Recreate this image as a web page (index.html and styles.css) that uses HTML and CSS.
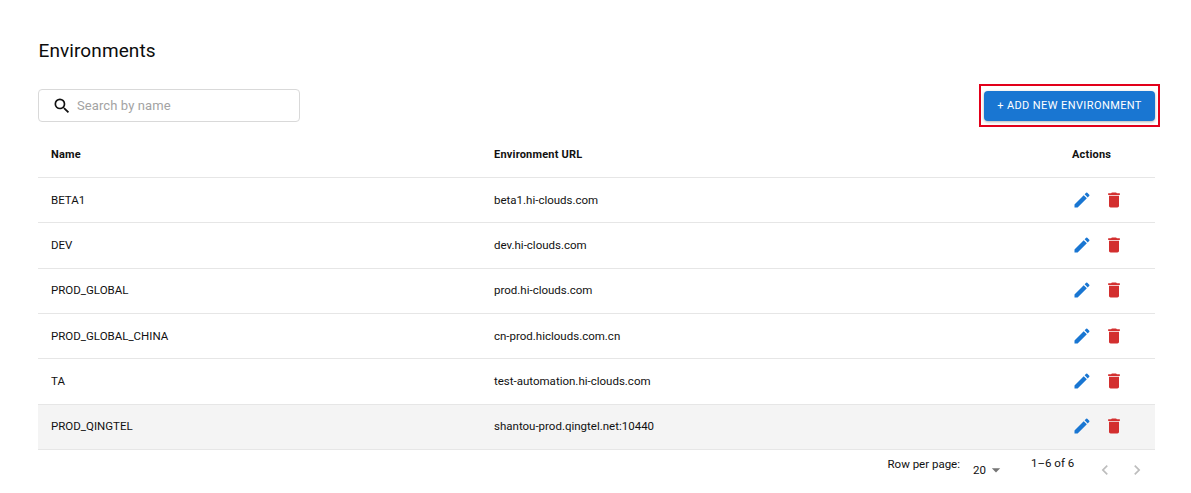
FILE: index.html
```html
<!DOCTYPE html>
<html lang="en">
<head>
<meta charset="utf-8">
<title>Environments</title>
<link rel="stylesheet" href="styles.css">
</head>
<body>
<main class="page">
  <h1 class="title">Environments</h1>
  <div class="toolbar">
    <label class="search">
      <svg class="search-icon" viewBox="0 0 24 24"><path d="M15.5 14h-.79l-.28-.27A6.47 6.47 0 0 0 16 9.5 6.5 6.5 0 1 0 9.5 16c1.61 0 3.09-.59 4.23-1.57l.27.28v.79l5 4.99L20.49 19l-4.99-5zm-6 0C7.01 14 5 11.99 5 9.5S7.01 5 9.5 5 14 7.01 14 9.5 11.99 14 9.5 14z"/></svg>
      <input class="search-input" type="text" placeholder="Search by name">
    </label>
    <div class="add-wrap">
      <button class="add-btn" type="button">+ Add new environment</button>
      <span class="highlight"></span>
    </div>
  </div>
  <div class="table">
    <div class="row head"><div>Name</div><div>Environment URL</div><div>Actions</div></div>
    <div class="row"><div>BETA1</div><div>beta1.hi-clouds.com</div><div class="actions"><svg class="icon edit" viewBox="0 0 24 24"><path d="M3 17.25V21h3.75L17.81 9.94l-3.75-3.75L3 17.25zM20.71 7.04a1 1 0 0 0 0-1.41l-2.34-2.34a1 1 0 0 0-1.41 0l-1.83 1.83 3.75 3.75 1.83-1.83z"/></svg><svg class="icon del" viewBox="0 0 24 24"><path d="M6 19c0 1.1.9 2 2 2h8c1.1 0 2-.9 2-2V7H6v12zM19 4h-3.5l-1-1h-5l-1 1H5v2h14V4z"/></svg></div></div>
    <div class="row"><div>DEV</div><div>dev.hi-clouds.com</div><div class="actions"><svg class="icon edit" viewBox="0 0 24 24"><path d="M3 17.25V21h3.75L17.81 9.94l-3.75-3.75L3 17.25zM20.71 7.04a1 1 0 0 0 0-1.41l-2.34-2.34a1 1 0 0 0-1.41 0l-1.83 1.83 3.75 3.75 1.83-1.83z"/></svg><svg class="icon del" viewBox="0 0 24 24"><path d="M6 19c0 1.1.9 2 2 2h8c1.1 0 2-.9 2-2V7H6v12zM19 4h-3.5l-1-1h-5l-1 1H5v2h14V4z"/></svg></div></div>
    <div class="row"><div>PROD_GLOBAL</div><div>prod.hi-clouds.com</div><div class="actions"><svg class="icon edit" viewBox="0 0 24 24"><path d="M3 17.25V21h3.75L17.81 9.94l-3.75-3.75L3 17.25zM20.71 7.04a1 1 0 0 0 0-1.41l-2.34-2.34a1 1 0 0 0-1.41 0l-1.83 1.83 3.75 3.75 1.83-1.83z"/></svg><svg class="icon del" viewBox="0 0 24 24"><path d="M6 19c0 1.1.9 2 2 2h8c1.1 0 2-.9 2-2V7H6v12zM19 4h-3.5l-1-1h-5l-1 1H5v2h14V4z"/></svg></div></div>
    <div class="row"><div>PROD_GLOBAL_CHINA</div><div>cn-prod.hiclouds.com.cn</div><div class="actions"><svg class="icon edit" viewBox="0 0 24 24"><path d="M3 17.25V21h3.75L17.81 9.94l-3.75-3.75L3 17.25zM20.71 7.04a1 1 0 0 0 0-1.41l-2.34-2.34a1 1 0 0 0-1.41 0l-1.83 1.83 3.75 3.75 1.83-1.83z"/></svg><svg class="icon del" viewBox="0 0 24 24"><path d="M6 19c0 1.1.9 2 2 2h8c1.1 0 2-.9 2-2V7H6v12zM19 4h-3.5l-1-1h-5l-1 1H5v2h14V4z"/></svg></div></div>
    <div class="row"><div>TA</div><div>test-automation.hi-clouds.com</div><div class="actions"><svg class="icon edit" viewBox="0 0 24 24"><path d="M3 17.25V21h3.75L17.81 9.94l-3.75-3.75L3 17.25zM20.71 7.04a1 1 0 0 0 0-1.41l-2.34-2.34a1 1 0 0 0-1.41 0l-1.83 1.83 3.75 3.75 1.83-1.83z"/></svg><svg class="icon del" viewBox="0 0 24 24"><path d="M6 19c0 1.1.9 2 2 2h8c1.1 0 2-.9 2-2V7H6v12zM19 4h-3.5l-1-1h-5l-1 1H5v2h14V4z"/></svg></div></div>
    <div class="row hover"><div>PROD_QINGTEL</div><div>shantou-prod.qingtel.net:10440</div><div class="actions"><svg class="icon edit" viewBox="0 0 24 24"><path d="M3 17.25V21h3.75L17.81 9.94l-3.75-3.75L3 17.25zM20.71 7.04a1 1 0 0 0 0-1.41l-2.34-2.34a1 1 0 0 0-1.41 0l-1.83 1.83 3.75 3.75 1.83-1.83z"/></svg><svg class="icon del" viewBox="0 0 24 24"><path d="M6 19c0 1.1.9 2 2 2h8c1.1 0 2-.9 2-2V7H6v12zM19 4h-3.5l-1-1h-5l-1 1H5v2h14V4z"/></svg></div></div>
  </div>
  <div class="pager">
    <span class="pager-label">Row per page:</span>
    <span class="pager-select">20<svg class="caret" viewBox="0 0 24 24"><path d="M7 10l5 5 5-5z"/></svg></span>
    <span class="pager-range">1–6 of 6</span>
    <span class="pager-nav">
      <svg class="nav" viewBox="0 0 24 24"><path d="M15.41 7.41 14 6l-6 6 6 6 1.41-1.41L10.83 12z"/></svg>
      <svg class="nav" viewBox="0 0 24 24"><path d="M10 6 8.59 7.41 13.17 12l-4.58 4.59L10 18l6-6z"/></svg>
    </span>
  </div>
</main>
</body>
</html>
```
FILE: styles.css
```css
* { box-sizing: border-box; }
html, body { margin: 0; background: #fff; }
body { font-family: Roboto, "Liberation Sans", sans-serif; color: #111; height: 493px; overflow: hidden; }
.page { padding: 39px 36px 0 38.5px; }
.title { margin: 0; font-size: 19px; line-height: 24px; font-weight: 400; letter-spacing: .1px; color: #0c0c0c; }
.toolbar { display: flex; justify-content: space-between; align-items: center; margin: 26px 0 0 -.5px; height: 33px; }
.search { display: flex; align-items: center; width: 262px; height: 33px; border: 1px solid #d9d9d9; border-radius: 4px; padding-left: 13px; }
.search-icon { width: 20px; height: 20px; fill: #111; flex: none; }
.search-input { border: 0; outline: 0; padding: 0; margin-left: 5px; flex: 1; font: 400 13px/20px Roboto, sans-serif; letter-spacing: .1px; color: inherit; background: none; }
.search-input::placeholder { color: #a3a3a3; opacity: 1; }
.add-wrap { position: relative; }
.add-btn { display: block; width: 171px; height: 30px; border: 0; border-radius: 4px; background: #1976d2; color: #fff; font: 400 11px/30px Roboto, sans-serif; letter-spacing: .4px; text-transform: uppercase; padding: 0; box-shadow: 0 1px 3px rgba(0,0,0,.3); }
.highlight { position: absolute; left: -5px; right: -5px; top: -7px; bottom: -6px; border: 2.5px solid #e2001a; pointer-events: none; }
.table { margin: 10px 0 0 -.5px; }
.row { display: grid; grid-template-columns: 443px 1fr 83px; align-items: center; height: 45.33px; padding: 0 0 1px 13px; border-bottom: 1px solid #e6e6e6; font-size: 11.5px; }
.row.head { height: 46px; font-weight: 700; font-size: 11px; letter-spacing: .2px; }
.row.hover { background: #f4f4f4; }
.actions { display: flex; align-items: center; gap: 12px; }
.icon { width: 20px; height: 20px; flex: none; }
.edit { fill: #1976d2; }
.del { fill: #d32f2f; }
.pager { display: flex; align-items: flex-start; height: 44px; padding-top: 7px; font-size: 11.5px; justify-content: flex-end; white-space: nowrap; }
.pager-label { line-height: 14px; }
.pager-select { display: flex; align-items: center; line-height: 14px; margin: 3px 0 0 13px; width: 30px; }
.caret { width: 20px; height: 20px; fill: #757575; flex: none; }
.pager-range { line-height: 14px; margin: -1px 0 0 28px; width: 42px; }
.pager-nav { display: flex; gap: 12px; margin: 3px 8px 0 22px; }
.nav { width: 20px; height: 20px; fill: #bdbdbd; }
```
